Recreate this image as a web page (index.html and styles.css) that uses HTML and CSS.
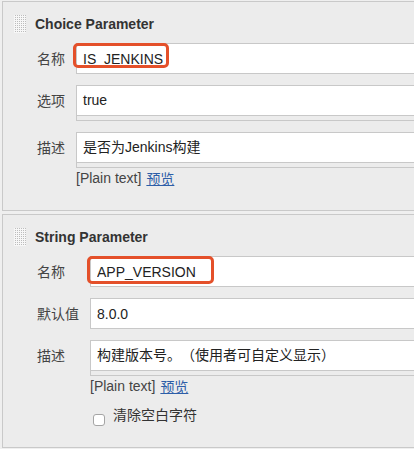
FILE: index.html
```html
<!DOCTYPE html>
<html lang="zh">
<head>
<meta charset="utf-8">
<title>Parameters</title>
<link rel="stylesheet" href="styles.css">
</head>
<body>
<div class="page">
  <section class="panel">
    <div class="panel-head"><span class="grip"></span><span class="title">Choice Parameter</span></div>
    <div class="fields">
      <label class="lbl">名称</label>
      <div class="ctl">
        <input class="box" type="text" value="IS_JENKINS">
        <span class="mark mark-name1"></span>
      </div>
      <label class="lbl">选项</label>
      <div class="ctl">
        <textarea class="box area">true</textarea>
        <div class="area-handle"></div>
      </div>
      <label class="lbl">描述</label>
      <div class="ctl">
        <textarea class="box area">是否为Jenkins构建</textarea>
        <div class="area-handle"></div>
        <div class="hint"><span>[Plain text]</span><a href="#">预览</a></div>
      </div>
    </div>
  </section>
  <section class="panel">
    <div class="panel-head"><span class="grip"></span><span class="title">String Parameter</span></div>
    <div class="fields">
      <label class="lbl">名称</label>
      <div class="ctl">
        <input class="box" type="text" value="APP_VERSION">
        <span class="mark mark-name2"></span>
      </div>
      <label class="lbl">默认值</label>
      <div class="ctl">
        <input class="box" type="text" value="8.0.0">
      </div>
      <label class="lbl">描述</label>
      <div class="ctl">
        <textarea class="box area">构建版本号。（使用者可自定义显示）</textarea>
        <div class="area-handle"></div>
        <div class="hint"><span>[Plain text]</span><a href="#">预览</a></div>
        <div class="check-row">
          <input class="check" type="checkbox">
          <span class="check-label">清除空白字符</span>
        </div>
      </div>
    </div>
  </section>
</div>
</body>
</html>
```
FILE: styles.css
```css
html, body {
  margin: 0;
  padding: 0;
  overflow: hidden;
  background: #efefef;
}
body {
  font-family: "Liberation Sans", "Noto Sans CJK SC", sans-serif;
  color: #333;
  font-size: 14px;
  text-spacing-trim: space-all;
}
.page {
  width: 480px;
  padding: 1px 0 0 2px;
  display: flex;
  flex-direction: column;
  gap: 3px;
}
.panel {
  background: #ececec;
  border: 1px solid #c9c9c9;
  padding: 13px 0 24px 0;
}
.panel-head {
  display: flex;
  align-items: center;
  height: 18px;
  padding-left: 11px;
}
.grip {
  width: 12px;
  height: 18px;
  background-color: #f7f7f7;
  background-image: conic-gradient(#bdbdbd 25%, transparent 0);
  background-size: 2px 2px;
  margin-right: 9px;
}
.title {
  font-weight: bold;
  font-size: 14px;
  color: #333;
  line-height: 17px;
}
.fields {
  margin-top: 10px;
  padding-left: 34px;
  display: grid;
  grid-template-columns: auto 1fr;
  column-gap: 11px;
  row-gap: 11px;
}
.lbl {
  font-family: "Noto Sans CJK SC", sans-serif;
  font-size: 14px;
  line-height: 31px;
  height: 31px;
  color: #444;
  align-self: start;
}
.ctl {
  position: relative;
  display: flex;
  flex-direction: column;
}
.box {
  box-sizing: border-box;
  display: block;
  width: 100%;
  height: 31px;
  margin: 0;
  border: 1px solid #c8c8c8;
  border-radius: 0;
  background: #fff;
  padding: 6px 6px;
  font-family: "Liberation Sans", "Noto Sans CJK SC", sans-serif;
  font-size: 14px;
  line-height: 17px;
  color: #222;
  outline: none;
  text-spacing-trim: space-all;
}
.area {
  resize: none;
  overflow: hidden;
  white-space: nowrap;
}
.area-handle {
  height: 4px;
  border: 1px solid #c8c8c8;
  border-top: none;
  background: #ececec;
}
.hint {
  margin-top: 2px;
  height: 16px;
  display: flex;
  align-items: center;
  gap: 5px;
  font-size: 14px;
  color: #444;
}
.hint a {
  color: #2d5ea8;
  text-decoration: underline;
  font-family: "Noto Sans CJK SC", sans-serif;
  font-size: 14px;
  line-height: 16px;
}
.check-row {
  margin-top: 12px;
  height: 17px;
  display: flex;
  align-items: flex-start;
}
.check {
  appearance: none;
  -webkit-appearance: none;
  width: 12px;
  height: 12px;
  margin: 8px 8px 0 3px;
  border: 1px solid #a5a5a5;
  border-radius: 3px;
  background: #fff;
  box-sizing: border-box;
  flex: none;
}
.check-label {
  font-family: "Noto Sans CJK SC", sans-serif;
  font-size: 14px;
  line-height: 17px;
  color: #333;
}
.mark {
  position: absolute;
  top: 0;
  left: -3px;
  box-sizing: border-box;
  border: 3px solid #e4502a;
  border-radius: 5px;
  pointer-events: none;
}
.mark-name1 {
  width: 96px;
  height: 25px;
}
.mark-name2 {
  width: 127px;
  height: 28px;
}
```
